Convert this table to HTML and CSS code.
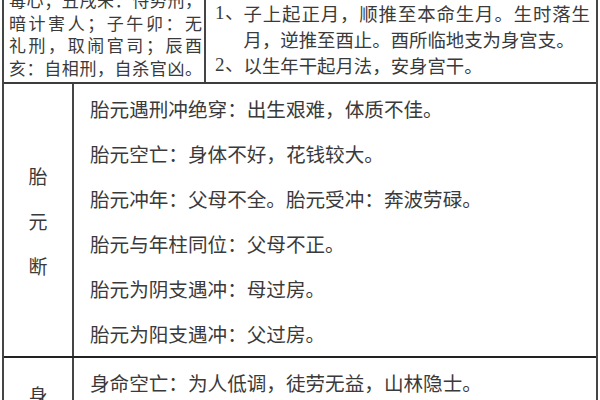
FILE: index.html
```html
<!DOCTYPE html>
<html lang="zh-CN">
<head>
<meta charset="utf-8">
<title>胎元断</title>
<link rel="stylesheet" href="styles.css">
</head>
<body>
<div class="sheet">
  <div class="top">
    <div class="cell-left">
      <div class="jl">毒心；丑戌未：恃势刑，</div>
      <div class="jl">暗计害人；子午卯：无</div>
      <div class="jl">礼刑，取闹官司；辰酉</div>
      <div class="jl">亥：自相刑，自杀官凶。</div>
    </div>
    <div class="cell-right">
      <div class="item">
        <span class="num">1、</span>
        <div class="body">
          <div class="jl">子上起正月，顺推至本命生月。生时落生</div>
          <div>月，逆推至酉止。酉所临地支为身宫支。</div>
        </div>
      </div>
      <div class="item">
        <span class="num">2、</span>
        <div class="body">
          <div>以生年干起月法，安身宫干。</div>
        </div>
      </div>
    </div>
  </div>
  <div class="section mid">
    <div class="label">
      <span>胎</span><span>元</span><span>断</span>
    </div>
    <div class="lines">
      <div>胎元遇刑冲绝穿：出生艰难，体质不佳。</div>
      <div>胎元空亡：身体不好，花钱较大。</div>
      <div>胎元冲年：父母不全。胎元受冲：奔波劳碌。</div>
      <div>胎元与年柱同位：父母不正。</div>
      <div>胎元为阴支遇冲：母过房。</div>
      <div>胎元为阳支遇冲：父过房。</div>
    </div>
  </div>
  <div class="section last">
    <div class="label label-last">
      <span>身</span><span>宫</span><span>断</span>
    </div>
    <div class="lines">
      <div>身命空亡：为人低调，徒劳无益，山林隐士。</div>
    </div>
  </div>
</div>
</body>
</html>
```

FILE: styles.css
```css
html, body {
  margin: 0;
  padding: 0;
  background: #ffffff;
  overflow: hidden;
}

body {
  width: 600px;
  height: 400px;
  font-family: "Noto Sans CJK SC", "Noto Sans", sans-serif;
  color: #3a3a3a;
}

.sheet {
  margin: -11px 0 0 2px;
  width: 596px;
  box-sizing: border-box;
  border-left: 2px solid #454545;
  border-right: 2px solid #454545;
}

.top {
  display: grid;
  grid-template-columns: 202px 1fr;
  height: 95px;
  box-sizing: border-box;
  border-bottom: 2px solid #3c3c3c;
}

.cell-left {
  border-right: 2px solid #454545;
  padding: 0 2px 0 5px;
  font-size: 17px;
  line-height: 22.5px;
  white-space: nowrap;
  overflow: hidden;
}

.jl {
  text-align: justify;
  text-align-last: justify;
}

.cell-right {
  padding: 11px 6px 0 9px;
  font-size: 18.4px;
  line-height: 26px;
  white-space: nowrap;
}

.item {
  display: flex;
}

.num {
  flex: 0 0 25px;
  white-space: nowrap;
  font-family: "Liberation Serif", serif;
  font-size: 19px;
}

.body {
  flex: 1;
  min-width: 0;
}

.section {
  display: grid;
  grid-template-columns: 70px 1fr;
}

.mid {
  border-bottom: 2px solid #222222;
  height: 274px;
  box-sizing: border-box;
}

.label {
  border-right: 2px solid #454545;
  display: flex;
  flex-direction: column;
  align-items: center;
  justify-content: center;
  font-size: 19px;
  line-height: 45px;
}

.label-last {
  justify-content: flex-start;
  padding-top: 14px;
}

.lines {
  padding: 2px 0 0 16px;
  font-size: 19.6px;
  line-height: 45px;
  white-space: nowrap;
}

.last {
  height: 140px;
}
```
